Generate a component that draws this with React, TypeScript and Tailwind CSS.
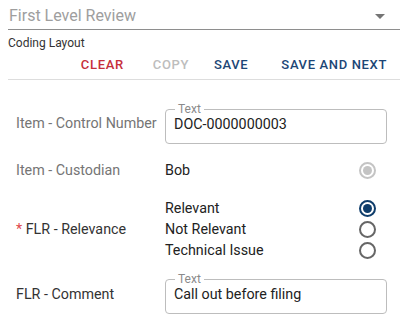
import React from 'react'

const font = { fontFamily: 'Roboto, "Liberation Sans", sans-serif' }

function Radio({ checked, disabled }: { checked?: boolean; disabled?: boolean }) {
  const ring = disabled ? 'border-[#c4c4c4]' : checked ? 'border-[#0f3d6b]' : 'border-[#666666]'
  return (
    <span className={`flex h-[17px] w-[17px] items-center justify-center rounded-full border-2 ${ring}`}>
      {checked && (
        <span className={`h-[9px] w-[9px] rounded-full ${disabled ? 'bg-[#c4c4c4]' : 'bg-[#0f3d6b]'}`}></span>
      )}
    </span>
  )
}

function OutlinedField({ value }: { value: string }) {
  return (
    <fieldset className="h-[40px] w-[222px] rounded border border-[#bdbdbd] px-[8px] pt-0">
      <legend className="ml-[1px] px-[3px] text-[12px] leading-[10px] text-[#8a8a8a]">Text</legend>
      <div className="-mt-[1px] leading-[22px] text-[#222222]">{value}</div>
    </fieldset>
  )
}

export default function App() {
  const options = ['Relevant', 'Not Relevant', 'Technical Issue']

  return (
    <div className="h-[333px] w-[403px] bg-white" style={font}>
      <div className="ml-2 mr-[3px] flex h-[30px] items-center justify-between border-b border-[#8e8e8e] pl-px pt-[2px]">
        <span className="text-[16px] text-[#9e9e9e]">First Level Review</span>
        <span className="mr-[15px] mt-[2px] h-0 w-0 border-x-[5px] border-t-[5px] border-x-transparent border-t-[#757575]"></span>
      </div>
      <p className="mx-2 mt-[5px] text-[12px] leading-[16px] text-[#333333]">Coding Layout</p>

      <div className="ml-2 mr-[3px] flex h-[29px] items-center justify-end border-b border-[#dddddd] pr-[13px] text-[13px] font-medium tracking-[0.05em]">
        <button className="text-[#c62f3b]">CLEAR</button>
        <button className="ml-[29px] text-[#bdbdbd]">COPY</button>
        <button className="ml-[25px] text-[#1c4676]">SAVE</button>
        <button className="ml-[33px] text-[#1c4676]">SAVE AND NEXT</button>
      </div>

      <div className="mt-[24px] flex flex-col px-4 text-[14.3px]">
        <div className="flex items-center">
          <span className="w-[149px] text-[#757575]">Item - Control Number</span>
          <OutlinedField value="DOC-0000000003" />
        </div>

        <div className="mt-[16px] flex items-center">
          <span className="w-[149px] text-[#757575]">Item - Custodian</span>
          <span className="flex-1 text-[#222222]">Bob</span>
          <span className="mr-[11px]">
            <Radio checked disabled />
          </span>
        </div>

        <div className="mt-[17px] flex items-center">
          <span className="w-[149px] text-[#333333]">
            <span className="text-[#e0474c]">* </span>FLR - Relevance
          </span>
          <div className="flex flex-1 flex-col">
            {options.map((o, i) => (
              <div key={o} className="flex h-[21px] items-center justify-between">
                <span className="text-[#222222]">{o}</span>
                <span className="mr-[11px]">
                  <Radio checked={i === 0} />
                </span>
              </div>
            ))}
          </div>
        </div>

        <div className="mt-[13px] flex items-center">
          <span className="w-[149px] text-[#333333]">FLR - Comment</span>
          <OutlinedField value="Call out before filing" />
        </div>
      </div>
    </div>
  )
}
